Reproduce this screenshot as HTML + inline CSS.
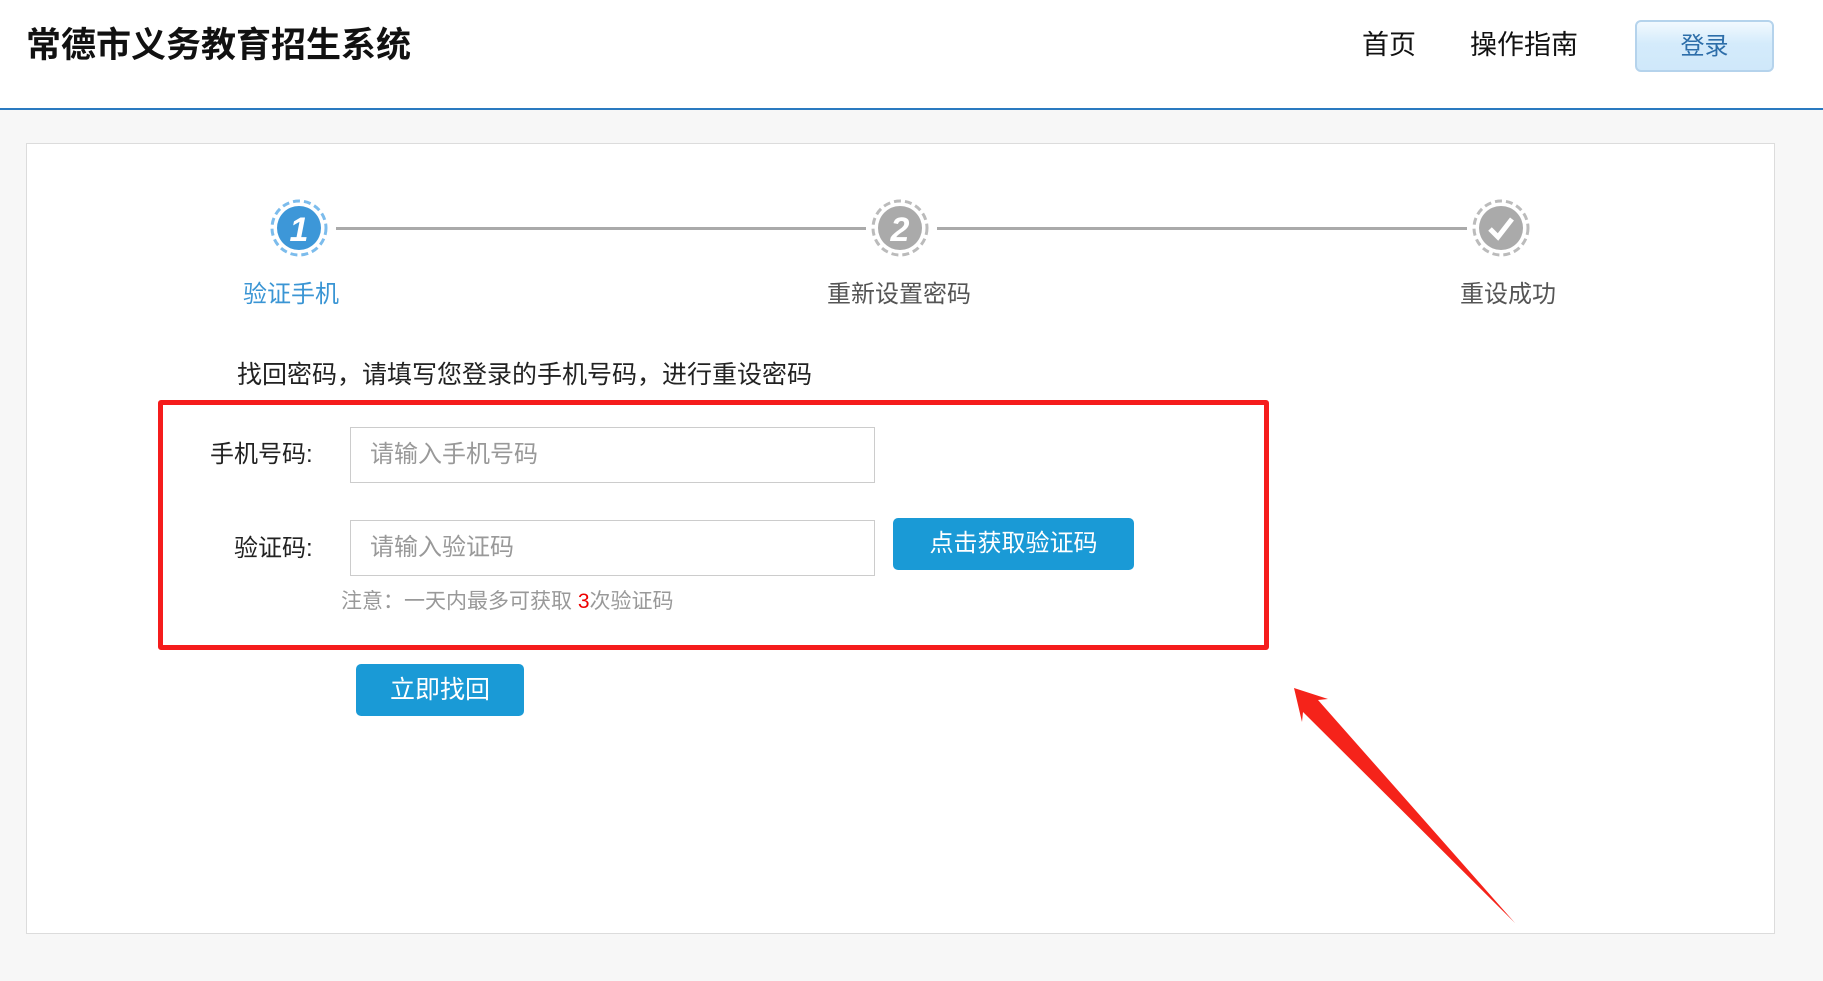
<!DOCTYPE html>
<html><head><meta charset="utf-8"><style>
*{margin:0;padding:0;box-sizing:border-box}
body{width:1823px;height:981px;background:#f7f7f7;font-family:"Liberation Sans","Noto Sans CJK SC",sans-serif;position:relative;overflow:hidden}
.abs{position:absolute}
.hdr{left:0;top:0;width:1823px;height:110px;background:#fff;border-bottom:2px solid #2a7ac0}
.title{left:26px;top:25px;font-size:35px;font-weight:bold;color:#111;line-height:42px}
.nav{top:26px;font-size:27px;color:#111;line-height:38px}
.login{left:1635px;top:20px;width:139px;height:52px;border:2px solid #b5d3ec;border-radius:6px;background:linear-gradient(#f2f9fe,#d4ebfb 45%,#cfe8fa);color:#2d6ea9;font-size:24px;text-align:center;line-height:50px}
.card{left:26px;top:143px;width:1749px;height:791px;background:#fff;border:1px solid #dcdcdc}
.line{height:3px;background:#aaa;top:227px}
.lbl{font-size:24px;color:#555;top:279px;line-height:32px;text-align:center;width:240px}
.txt{font-size:25px;color:#222}
.inp{left:350px;width:525px;height:56px;border:1px solid #ccc;background:#fff;font-size:24px;color:#999;line-height:54px;padding-left:19px}
.btn{background:#1a9ad6;color:#fff;border-radius:5px;text-align:center}
</style></head><body>
<div class="abs hdr"></div>
<div class="abs title">常德市义务教育招生系统</div>
<div class="abs nav" style="left:1362px">首页</div>
<div class="abs nav" style="left:1470px">操作指南</div>
<div class="abs login">登录</div>
<div class="abs card"></div>
<div class="abs line" style="left:336px;width:530px"></div>
<div class="abs line" style="left:937px;width:530px"></div>
<svg class="abs" style="left:0;top:0" width="1823" height="981">
<g><circle cx="299" cy="228" r="27" fill="none" stroke="#7cbcec" stroke-width="3" stroke-dasharray="7 4"/><circle cx="299" cy="228" r="22" fill="#3d97d8"/>
<text x="299" y="241" fill="#fff" font-size="34" font-weight="bold" font-style="italic" text-anchor="middle" font-family="Liberation Sans">1</text></g>
<g><circle cx="900" cy="228" r="27" fill="none" stroke="#bbb" stroke-width="3" stroke-dasharray="7 4"/><circle cx="900" cy="228" r="22" fill="#aaa"/>
<text x="900" y="241" fill="#fff" font-size="34" font-weight="bold" font-style="italic" text-anchor="middle" font-family="Liberation Sans">2</text></g>
<g><circle cx="1501" cy="228" r="27" fill="none" stroke="#bbb" stroke-width="3" stroke-dasharray="7 4"/><circle cx="1501" cy="228" r="22" fill="#aaa"/>
<path d="M1490 229 L1498 237 L1512 219" fill="none" stroke="#fff" stroke-width="5"/></g>
<polygon points="1294,688 1328,699 1318,700 1515,923 1303,712 1302,722" fill="#f5231a"/>
</svg>
<div class="abs lbl" style="left:171px;color:#3a95d4">验证手机</div>
<div class="abs lbl" style="left:779px">重新设置密码</div>
<div class="abs lbl" style="left:1388px">重设成功</div>
<div class="abs txt" style="left:237px;top:358px;line-height:34px">找回密码，请填写您登录的手机号码，进行重设密码</div>
<div class="abs" style="left:158px;top:400px;width:1111px;height:250px;border:5px solid #f51c1c;border-radius:3px"></div>
<div class="abs txt" style="left:210px;top:438px;line-height:34px;font-size:24px">手机号码:</div>
<div class="abs inp" style="top:427px">请输入手机号码</div>
<div class="abs txt" style="left:234px;top:532px;line-height:34px;font-size:24px">验证码:</div>
<div class="abs inp" style="top:520px">请输入验证码</div>
<div class="abs btn" style="left:893px;top:518px;width:241px;height:52px;font-size:24px;line-height:52px">点击获取验证码</div>
<div class="abs" style="left:341px;top:589px;font-size:21px;color:#999;line-height:26px">注意：一天内最多可获取 <span style="color:#e00">3</span>次验证码</div>
<div class="abs btn" style="left:356px;top:664px;width:168px;height:52px;font-size:25px;line-height:52px">立即找回</div>
</body></html>
